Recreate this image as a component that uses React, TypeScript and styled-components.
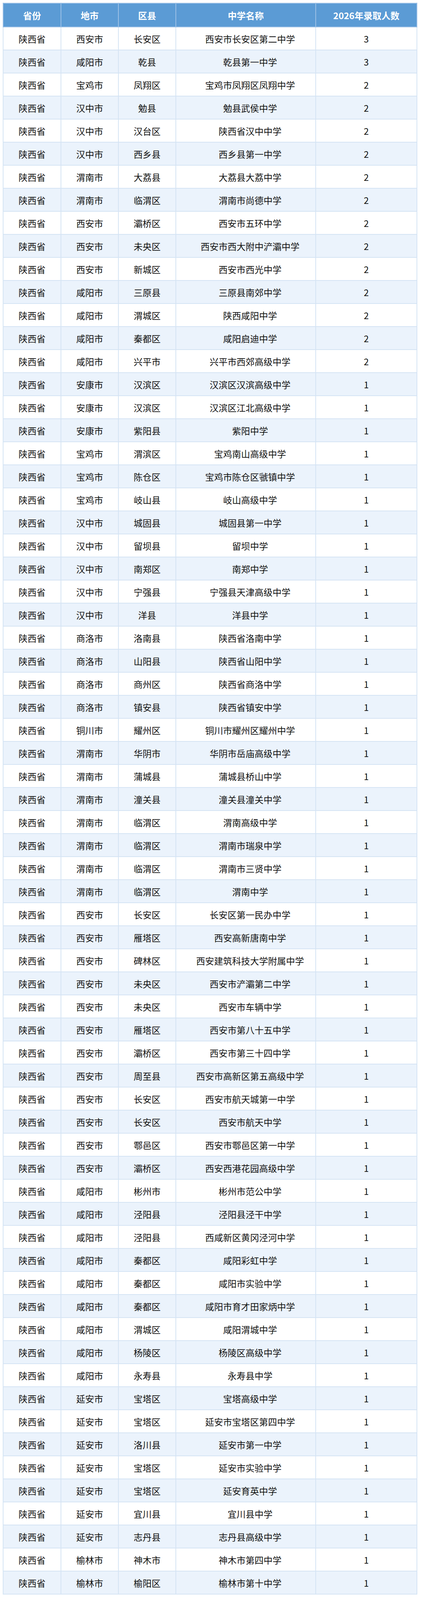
import React from 'react';
import styled, {createGlobalStyle} from "styled-components";

const GlobalStyle = createGlobalStyle`
    body {
        margin: 0;
        background: #ffffff;
        font-family: "Noto Sans CJK SC", "Noto Sans", sans-serif;
    }
`

const Page = styled.div`
    padding: 7px 0 0 7px;
`

const Table = styled.table`
    width: 1049px;
    border-collapse: collapse;
    table-layout: fixed;
    border: 2px solid #a9c9ea;
`

// collapsed borders add ~2px on top of the row height
const HeadRow = styled.tr`
    height: 61px;
`

const HeadCell = styled.th<{ $width: number }>`
    width: ${p => p.$width}px;
    padding: 0;
    line-height: 24px;
    background: #5b9bd5;
    color: #ffffff;
    font-size: 23px;
    font-weight: 700;
    text-align: center;
    border: 2px solid #9cc0e6;
    border-top: none;
`

const Row = styled.tr<{ $alt: boolean }>`
    height: 59px;
    background: ${p => p.$alt ? "#ebf3fc" : "#ffffff"};
`

const Cell = styled.td<{ $shift?: boolean }>`
    padding: 0 0 0 ${p => p.$shift ? 22 : 0}px;
    line-height: 24px;
    font-size: 23px;
    color: #111111;
    text-align: center;
    white-space: nowrap;
    border: 2px solid #d5e4f4;
`

const columns: [string, number][] = [
    ["省份", 146],
    ["地市", 145],
    ["区县", 145],
    ["中学名称", 356],
    ["2026年录取人数", 257],
]

const rows: [string, string, string, number][] = [
    ["西安市", "长安区", "西安市长安区第二中学", 3],
    ["咸阳市", "乾县", "乾县第一中学", 3],
    ["宝鸡市", "凤翔区", "宝鸡市凤翔区凤翔中学", 2],
    ["汉中市", "勉县", "勉县武侯中学", 2],
    ["汉中市", "汉台区", "陕西省汉中中学", 2],
    ["汉中市", "西乡县", "西乡县第一中学", 2],
    ["渭南市", "大荔县", "大荔县大荔中学", 2],
    ["渭南市", "临渭区", "渭南市尚德中学", 2],
    ["西安市", "灞桥区", "西安市五环中学", 2],
    ["西安市", "未央区", "西安市西大附中浐灞中学", 2],
    ["西安市", "新城区", "西安市西光中学", 2],
    ["咸阳市", "三原县", "三原县南郊中学", 2],
    ["咸阳市", "渭城区", "陕西咸阳中学", 2],
    ["咸阳市", "秦都区", "咸阳启迪中学", 2],
    ["咸阳市", "兴平市", "兴平市西郊高级中学", 2],
    ["安康市", "汉滨区", "汉滨区汉滨高级中学", 1],
    ["安康市", "汉滨区", "汉滨区江北高级中学", 1],
    ["安康市", "紫阳县", "紫阳中学", 1],
    ["宝鸡市", "渭滨区", "宝鸡南山高级中学", 1],
    ["宝鸡市", "陈仓区", "宝鸡市陈仓区虢镇中学", 1],
    ["宝鸡市", "岐山县", "岐山高级中学", 1],
    ["汉中市", "城固县", "城固县第一中学", 1],
    ["汉中市", "留坝县", "留坝中学", 1],
    ["汉中市", "南郑区", "南郑中学", 1],
    ["汉中市", "宁强县", "宁强县天津高级中学", 1],
    ["汉中市", "洋县", "洋县中学", 1],
    ["商洛市", "洛南县", "陕西省洛南中学", 1],
    ["商洛市", "山阳县", "陕西省山阳中学", 1],
    ["商洛市", "商州区", "陕西省商洛中学", 1],
    ["商洛市", "镇安县", "陕西省镇安中学", 1],
    ["铜川市", "耀州区", "铜川市耀州区耀州中学", 1],
    ["渭南市", "华阴市", "华阴市岳庙高级中学", 1],
    ["渭南市", "蒲城县", "蒲城县桥山中学", 1],
    ["渭南市", "潼关县", "潼关县潼关中学", 1],
    ["渭南市", "临渭区", "渭南高级中学", 1],
    ["渭南市", "临渭区", "渭南市瑞泉中学", 1],
    ["渭南市", "临渭区", "渭南市三贤中学", 1],
    ["渭南市", "临渭区", "渭南中学", 1],
    ["西安市", "长安区", "长安区第一民办中学", 1],
    ["西安市", "雁塔区", "西安高新唐南中学", 1],
    ["西安市", "碑林区", "西安建筑科技大学附属中学", 1],
    ["西安市", "未央区", "西安市浐灞第二中学", 1],
    ["西安市", "未央区", "西安市车辆中学", 1],
    ["西安市", "雁塔区", "西安市第八十五中学", 1],
    ["西安市", "灞桥区", "西安市第三十四中学", 1],
    ["西安市", "周至县", "西安市高新区第五高级中学", 1],
    ["西安市", "长安区", "西安市航天城第一中学", 1],
    ["西安市", "长安区", "西安市航天中学", 1],
    ["西安市", "鄠邑区", "西安市鄠邑区第一中学", 1],
    ["西安市", "灞桥区", "西安西港花园高级中学", 1],
    ["咸阳市", "彬州市", "彬州市范公中学", 1],
    ["咸阳市", "泾阳县", "泾阳县泾干中学", 1],
    ["咸阳市", "泾阳县", "西咸新区黄冈泾河中学", 1],
    ["咸阳市", "秦都区", "咸阳彩虹中学", 1],
    ["咸阳市", "秦都区", "咸阳市实验中学", 1],
    ["咸阳市", "秦都区", "咸阳市育才田家炳中学", 1],
    ["咸阳市", "渭城区", "咸阳渭城中学", 1],
    ["咸阳市", "杨陵区", "杨陵区高级中学", 1],
    ["咸阳市", "永寿县", "永寿县中学", 1],
    ["延安市", "宝塔区", "宝塔高级中学", 1],
    ["延安市", "宝塔区", "延安市宝塔区第四中学", 1],
    ["延安市", "洛川县", "延安市第一中学", 1],
    ["延安市", "宝塔区", "延安市实验中学", 1],
    ["延安市", "宝塔区", "延安育英中学", 1],
    ["延安市", "宜川县", "宜川县中学", 1],
    ["延安市", "志丹县", "志丹县高级中学", 1],
    ["榆林市", "神木市", "神木市第四中学", 1],
    ["榆林市", "榆阳区", "榆林市第十中学", 1],
]

export default function App() {
    return (
        <>
            <GlobalStyle/>
            <Page>
                <Table>
                    <thead>
                    <HeadRow>
                        {columns.map(([title, width]) => (
                            <HeadCell key={title} $width={width}>{title}</HeadCell>
                        ))}
                    </HeadRow>
                    </thead>
                    <tbody>
                    {rows.map(([city, district, school, count], i) => (
                        <Row key={i} $alt={i % 2 === 1}>
                            <Cell>陕西省</Cell>
                            <Cell>{city}</Cell>
                            <Cell>{district}</Cell>
                            <Cell $shift>{school}</Cell>
                            <Cell>{count}</Cell>
                        </Row>
                    ))}
                    </tbody>
                </Table>
            </Page>
        </>
    )
}
